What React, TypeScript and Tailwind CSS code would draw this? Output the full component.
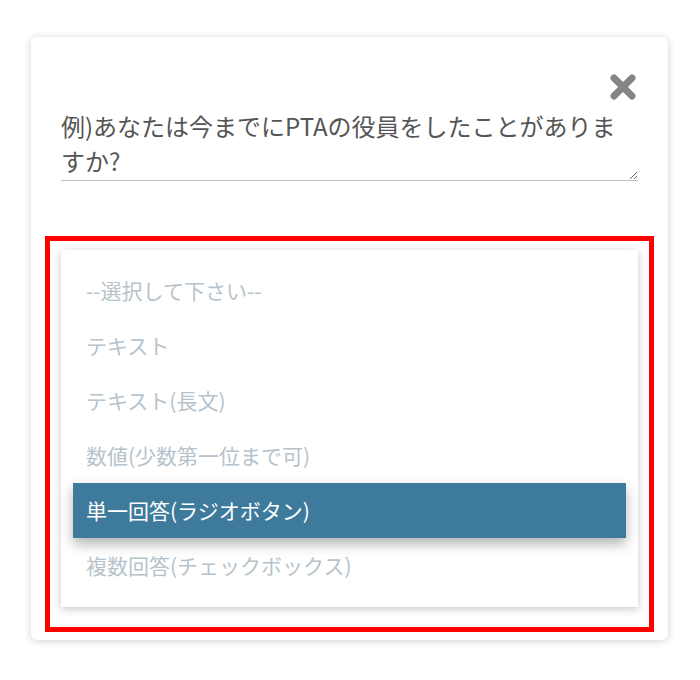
import { useState } from 'react';

const OPTIONS = [
  '--選択して下さい--',
  'テキスト',
  'テキスト(長文)',
  '数値(少数第一位まで可)',
  '単一回答(ラジオボタン)',
  '複数回答(チェックボックス)',
];

function CloseIcon() {
  return (
    <svg width="28" height="28" viewBox="0 0 28 28" aria-hidden="true">
      <path
        d="M5 5 L23 23 M23 5 L5 23"
        stroke="#858585"
        strokeWidth="7"
        strokeLinecap="round"
        fill="none"
      />
    </svg>
  );
}

export default function App() {
  const [selected, setSelected] = useState(4);

  return (
    <div
      className="min-h-screen bg-white px-[31px] pt-[37px]"
      style={{ fontFamily: '"Noto Sans CJK JP", "Noto Sans", sans-serif' }}
    >
      <div className="w-[637px] rounded-md bg-white pb-[8px] shadow-[0_1px_8px_rgba(0,0,0,0.18)]">
        <div className="flex justify-end px-[31px] pt-[36px]">
          <button type="button" aria-label="閉じる" className="leading-none">
            <CloseIcon />
          </button>
        </div>

        <div className="px-[30px] pt-[7px]">
          <textarea
            defaultValue="例)あなたは今までにPTAの役員をしたことがありますか?"
            className="block h-[73px] w-full resize-y border-b border-[#bdbdbd] bg-transparent text-[24px] leading-[35px] text-[#555] outline-none"
          />
        </div>

        <div className="mx-[14px] mt-[55px] border-[5px] border-[#ff0000] pb-[20px] pl-[11px] pr-[11px] pt-[9px]">
          <ul className="bg-white px-3 pb-[14px] pt-[13px] shadow-[0_2px_8px_rgba(0,0,0,0.22)]">
            {OPTIONS.map((opt, i) => (
              <li
                key={opt}
                onClick={() => setSelected(i)}
                className={
                  i === selected
                    ? 'flex h-[55px] cursor-pointer items-center bg-[#3d7a9c] pl-[13px] text-[21px] text-white shadow-[0_6px_12px_rgba(0,0,0,0.3)]'
                    : 'flex h-[55px] cursor-pointer items-center pl-[13px] text-[21px] text-[#b6c3cb]'
                }
              >
                {opt}
              </li>
            ))}
          </ul>
        </div>
      </div>
    </div>
  );
}
